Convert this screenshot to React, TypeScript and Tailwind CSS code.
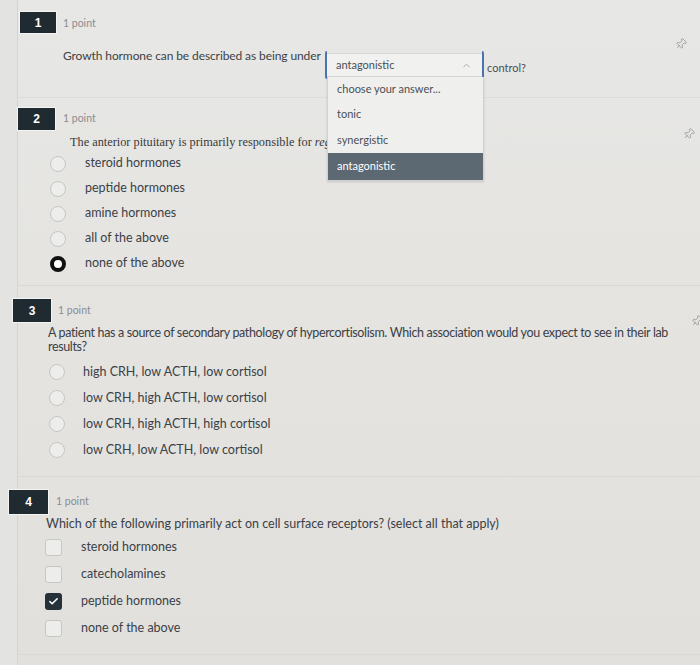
import { Check, ChevronUp, Pin } from 'lucide-react';

const q2Options = ['steroid hormones', 'peptide hormones', 'amine hormones', 'all of the above', 'none of the above'];
const q3Options = [
  'high CRH, low ACTH, low cortisol',
  'low CRH, high ACTH, low cortisol',
  'low CRH, high ACTH, high cortisol',
  'low CRH, low ACTH, low cortisol',
];
const q4Options = [
  { label: 'steroid hormones', checked: false },
  { label: 'catecholamines', checked: false },
  { label: 'peptide hormones', checked: true },
  { label: 'none of the above', checked: false },
];

function Badge({ n, className }: { n: number; className: string }) {
  return (
    <div
      className={`flex items-center justify-center bg-[#1f2a31] text-white text-[12px] font-bold font-['Liberation_Sans',sans-serif] shadow-[0_0_0_1px_#f4f4f2] ${className}`}
    >
      {n}
    </div>
  );
}

function Radio({ selected }: { selected?: boolean }) {
  if (selected) {
    return <div className="w-[16px] h-[16px] rounded-full border-[4px] border-[#111] bg-white shrink-0" />;
  }
  return <div className="w-[16px] h-[16px] rounded-full border border-[#c6c6c3] bg-[#ededeb] shrink-0" />;
}

function PinIcon() {
  return <Pin size={12} strokeWidth={1.5} className="text-[#8d8d8d] rotate-45" />;
}

export default function App() {
  return (
    <div className="w-[700px] h-[665px] overflow-hidden flex bg-linear-to-b from-[#e7e7e5] to-[#e2e0dc] font-['Lato',sans-serif] text-[#3b4147]">
      <div className="w-[18px] shrink-0 bg-[#e3e3e1] border-r border-[#d4d4d0]" />
      <div className="flex-1 flex flex-col">
        {/* question 1 */}
        <section className="relative z-10 h-[97px] pt-[12px]">
          <div className="flex items-center">
            <Badge n={1} className="ml-[2px] w-[36px] h-[21px]" />
            <span className="ml-[7px] text-[10.5px] text-[#8a8d90] mt-[3px]">1 point</span>
          </div>
          <div className="flex items-start mt-[14px] ml-[45px]">
            <span className="w-[262px] whitespace-nowrap text-[12px] leading-[18px] tracking-[-0.1px] text-[#3d4247]">
              Growth hormone can be described as being under
            </span>
            <div className="relative mt-[4px] w-[159px] h-[28px] border-x-2 border-[#4a74b0] rounded-[2px] flex">
              <div className="flex-1 my-[2px] bg-[#f1f1f0] border-y border-[#d8d8d6] flex items-center pl-[9px] pr-[10px]">
                <span className="text-[11px] text-[#4a4f54]">antagonistic</span>
                <ChevronUp size={11} strokeWidth={1.5} className="ml-auto text-[#8a8a8a]" />
              </div>
              <div className="absolute left-0 top-[26px] w-[157px] bg-[#efefee] border-x border-b border-[#d2d2d0] shadow-[0_1px_2px_rgba(0,0,0,0.15)] text-[11px]">
                <div className="h-[25px] flex items-center pl-[9px] text-[#4a4f54]">choose your answer...</div>
                <div className="h-[25px] flex items-center pl-[9px] text-[#4a4f54]">tonic</div>
                <div className="h-[26px] flex items-center pl-[9px] text-[#4a4f54]">synergistic</div>
                <div className="h-[27px] flex items-center pl-[9px] bg-[#5d6972] text-white">antagonistic</div>
              </div>
            </div>
            <span className="ml-[3px] mt-[14px] text-[11px] leading-[14px] text-[#4a4f54]">control?</span>
          </div>
          <div className="absolute right-[13px] top-[38px]">
            <PinIcon />
          </div>
        </section>

        {/* question 2 */}
        <section className="relative h-[188px] pt-[10px] border-t border-[#dcdcd9]">
          <div className="flex items-center">
            <Badge n={2} className="w-[37px] h-[22px]" />
            <span className="ml-[8px] text-[10.5px] text-[#8a8d90]">1 point</span>
          </div>
          <div className="mt-[5px] ml-[52px] whitespace-nowrap font-['Liberation_Serif',serif] text-[12.3px] leading-[15px] text-[#3a3a3a]">
            The anterior pituitary is primarily responsible for <i>regulating</i>
          </div>
          <div className="mt-[1px] flex flex-col">
            {q2Options.map((o, i) => (
              <div key={o} className="h-[25px] flex items-center ml-[32px]">
                <Radio selected={i === 4} />
                <span className="ml-[19px] text-[12.5px]">{o}</span>
              </div>
            ))}
          </div>
          <div className="absolute right-[5px] top-[30px]">
            <PinIcon />
          </div>
        </section>

        {/* question 3 */}
        <section className="relative h-[191px] pt-[13px] border-t border-[#d8d8d5]">
          <div className="flex items-center">
            <Badge n={3} className="-ml-[5px] w-[38px] h-[23px]" />
            <span className="ml-[7px] text-[10.5px] text-[#8a8d90]">1 point</span>
          </div>
          <p className="mt-[4px] ml-[30px] w-[648px] text-[12.5px] leading-[14px] tracking-[-0.35px] text-[#3a4046]">
            A patient has a source of secondary pathology of hypercortisolism. Which association would you expect to see in their lab results?
          </p>
          <div className="mt-[5px] flex flex-col">
            {q3Options.map((o) => (
              <div key={o} className="h-[26px] flex items-center ml-[31px]">
                <Radio />
                <span className="ml-[18px] text-[12.5px]">{o}</span>
              </div>
            ))}
          </div>
          <div className="absolute right-[-3px] top-[29px]">
            <PinIcon />
          </div>
        </section>

        {/* question 4 */}
        <section className="relative h-[178px] pt-[13px] border-t border-[#d8d8d5]">
          <div className="flex items-center">
            <Badge n={4} className="-ml-[9px] w-[39px] h-[24px]" />
            <span className="ml-[8px] text-[10.5px] text-[#8a8d90]">1 point</span>
          </div>
          <p className="mt-[2px] ml-[28px] text-[12.5px] leading-[16px] text-[#3a4046]">
            Which of the following primarily act on cell surface receptors? (select all that apply)
          </p>
          <div className="mt-[2px] flex flex-col">
            {q4Options.map((o) => (
              <div key={o.label} className="h-[27px] flex items-center ml-[27px]">
                {o.checked ? (
                  <div className="w-[17px] h-[17px] rounded-[3px] bg-[#26313a] flex items-center justify-center shrink-0">
                    <Check size={11} strokeWidth={3.5} className="text-white" />
                  </div>
                ) : (
                  <div className="w-[17px] h-[17px] rounded-[3px] border border-[#c6c6c3] bg-[#ededeb] shrink-0" />
                )}
                <span className="ml-[19px] text-[12.5px]">{o.label}</span>
              </div>
            ))}
          </div>
        </section>
        <div className="border-t border-[#d8d8d5]" />
      </div>
    </div>
  );
}
